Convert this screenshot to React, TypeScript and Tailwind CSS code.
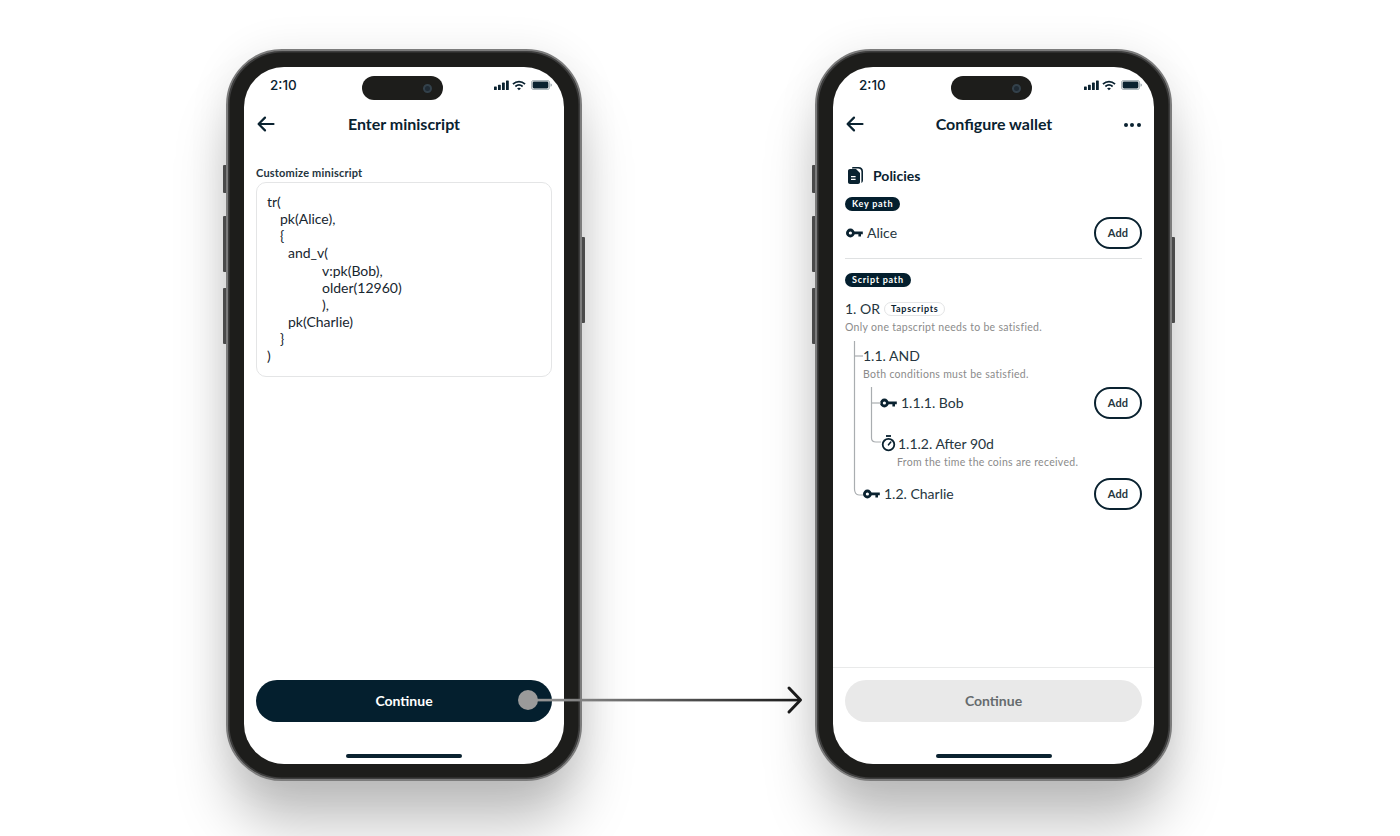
import type { ReactNode } from 'react';

const ink = '#0a2230';

function KeyIcon() {
  return (
    <svg viewBox="0 0 17 10" className="h-[10px] w-[17px] shrink-0" fill="none">
      <circle cx="4.4" cy="5" r="3" stroke={ink} strokeWidth="2.8" />
      <path d="M7.5 3.4H16.8V6.2H15V8.4H12.4V6.2H7.5Z" fill={ink} />
    </svg>
  );
}

function TimerIcon() {
  return (
    <svg viewBox="0 0 15 17" className="h-[17px] w-[15px] shrink-0" fill="none" stroke={ink}>
      <path d="M5 1H10" strokeWidth="1.8" />
      <circle cx="7.5" cy="9.6" r="5.8" strokeWidth="1.8" />
      <path d="M7.5 9.8L9.8 7" strokeWidth="1.6" strokeLinecap="round" />
    </svg>
  );
}

function PolicyIcon() {
  return (
    <svg viewBox="0 0 17 19" className="h-[19px] w-[17px] shrink-0">
      <path d="M6 1H11.5C14.5 1 16 2.6 16 5.5V14C16 15.6 15.4 16.6 14.4 17V5.6C14.4 3.6 13 2.4 11 2.4H5C5 1.6 5.3 1 6 1Z" fill={ink} />
      <path d="M3 3H9L13 7V16C13 17.2 12.2 18 11 18H3C1.8 18 1 17.2 1 16V5C1 3.8 1.8 3 3 3Z" fill={ink} />
      <path d="M4 10.6H8.6M4 13.4H8.6" stroke="#fff" strokeWidth="1.3" />
    </svg>
  );
}

function StatusIcons() {
  return (
    <div className="flex items-center gap-[3px]">
      <svg viewBox="0 0 15 10" className="h-[10px] w-[15px]" fill={ink}>
        <rect x="0" y="6.5" width="2.8" height="3.5" rx="0.6" />
        <rect x="4" y="4.8" width="2.8" height="5.2" rx="0.6" />
        <rect x="8" y="2.6" width="2.8" height="7.4" rx="0.6" />
        <rect x="12" y="0.4" width="2.8" height="9.6" rx="0.6" />
      </svg>
      <svg viewBox="0 0 15 11" className="h-[11px] w-[14px]" fill="none" stroke={ink} strokeWidth="1.9">
        <path d="M1 4C4.8 0.6 10.2 0.6 14 4" />
        <path d="M3.6 6.6C5.9 4.6 9.1 4.6 11.4 6.6" />
        <path d="M7.5 10.4L5.9 8.8C6.8 8.1 8.2 8.1 9.1 8.8Z" fill={ink} strokeWidth="0.6" />
      </svg>
      <svg viewBox="0 0 21 10" className="ml-[2px] h-[10px] w-[21px]">
        <rect x="0.4" y="0.4" width="18.2" height="9.2" rx="2.4" fill="none" stroke="#8d9aa2" strokeWidth="0.8" />
        <rect x="1.6" y="1.6" width="15.8" height="6.8" rx="1.4" fill={ink} />
        <path d="M19.6 3.4C20.4 3.6 20.8 4.2 20.8 5C20.8 5.8 20.4 6.4 19.6 6.6Z" fill="#8d9aa2" />
      </svg>
    </div>
  );
}

function BackArrow() {
  return (
    <svg viewBox="0 0 18 16" className="h-[16px] w-[18px]" fill="none" stroke={ink} strokeWidth="2.2" strokeLinecap="round" strokeLinejoin="round">
      <path d="M16.5 8H1.8M8 1.6L1.6 8L8 14.4" />
    </svg>
  );
}

function Phone({ title, menu, width, children }: { title: string; menu?: boolean; width: string; children: ReactNode }) {
  return (
    <div className={`relative h-[732px] ${width} shrink-0 rounded-[56px] border-[2px] border-[#7c7c7c] bg-[#1d1d1b] pb-[15px] pl-[16px] pr-[16px] pt-[16px] shadow-[inset_0_0_0_1.5px_#3e3e3e,0_48px_56px_-6px_rgba(0,0,0,0.25),0_0_40px_rgba(0,0,0,0.08)]`}>
      {/* side buttons */}
      <div className="absolute left-[-5px] top-[114px] h-[28px] w-[3px] rounded-l-[1px] bg-[#4a4a4a]" />
      <div className="absolute left-[-5px] top-[165px] h-[56px] w-[3px] rounded-l-[1px] bg-[#4a4a4a]" />
      <div className="absolute left-[-5px] top-[237px] h-[56px] w-[3px] rounded-l-[1px] bg-[#4a4a4a]" />
      <div className="absolute right-[-5px] top-[186px] h-[86px] w-[3px] rounded-r-[1px] bg-[#4a4a4a]" />

      <div className="relative flex h-full w-full flex-col overflow-hidden rounded-[40px] bg-white text-[#0a2230]">
        {/* dynamic island */}
        <div className="absolute left-[118px] top-[9px] flex h-[24px] w-[81px] items-center justify-end rounded-full bg-[#1d1d1b] pr-[11px]">
          <div className="h-[9px] w-[9px] rounded-full border-[2px] border-[#33414b] bg-[#1f2a33]" />
        </div>

        <div className="flex h-[36px] shrink-0 items-center justify-between pl-[26px] pr-[12px]">
          <span className="font-[family-name:Inter,sans-serif] text-[13.5px] font-medium">2:10</span>
          <StatusIcons />
        </div>

        <div className="flex h-[42px] shrink-0 items-center justify-between px-[13px]">
          <BackArrow />
          <span className="text-[16px] font-bold">{title}</span>
          {menu ? (
            <div className="mt-[2px] flex gap-[2.5px]">
              <div className="h-[4px] w-[4px] rounded-full bg-[#0a2230]" />
              <div className="h-[4px] w-[4px] rounded-full bg-[#0a2230]" />
              <div className="h-[4px] w-[4px] rounded-full bg-[#0a2230]" />
            </div>
          ) : (
            <div className="w-[18px]" />
          )}
        </div>

        {children}

        <div className="mx-auto mb-[6px] h-[4px] w-[116px] shrink-0 rounded-full bg-[#0a2230]" />
      </div>
    </div>
  );
}

function AddButton() {
  return (
    <button className="flex h-[32px] w-[48px] shrink-0 items-center justify-center rounded-full border-2 border-[#0a2230] bg-white text-[11px] font-bold tracking-[0.2px]">
      Add
    </button>
  );
}

function Badge({ children }: { children: ReactNode }) {
  return (
    <span className="flex h-[14px] w-fit items-center rounded-full bg-[#041f2e] px-[7px] text-[9px] font-bold tracking-[0.75px] text-white">
      {children}
    </span>
  );
}

function Hint({ children, className = '' }: { children: ReactNode; className?: string }) {
  return <p className={`text-[10.5px] leading-[14px] tracking-[0.3px] text-[#8b8b8b] ${className}`}>{children}</p>;
}

const scriptLines = [
  { text: 'tr(', indent: 'pl-0' },
  { text: 'pk(Alice),', indent: 'pl-[13px]' },
  { text: '{', indent: 'pl-[13px]' },
  { text: 'and_v(', indent: 'pl-[21px]' },
  { text: 'v:pk(Bob),', indent: 'pl-[55px]' },
  { text: 'older(12960)', indent: 'pl-[55px]' },
  { text: '),', indent: 'pl-[55px]' },
  { text: 'pk(Charlie)', indent: 'pl-[21px]' },
  { text: '}', indent: 'pl-[13px]' },
  { text: ')', indent: 'pl-0' },
];

function MiniscriptScreen() {
  return (
    <div className="flex min-h-0 flex-1 flex-col px-[12px]">
      <p className="mt-[21px] text-[11px] font-bold leading-[14px] tracking-[0.2px] text-[#24343e]">Customize miniscript</p>
      <div className="mt-[2px] h-[195px] rounded-[10px] border border-[#e4e5e6] pl-[10px] pt-[10px] text-[14px] leading-[17.15px] text-[#17262f]">
        {scriptLines.map((line, i) => (
          <div key={i} className={line.indent}>
            {line.text}
          </div>
        ))}
      </div>
      <button className="mt-auto mb-[32px] flex h-[42px] w-full shrink-0 items-center justify-center rounded-full bg-[#041f2e] pb-[2px] text-[14px] font-bold text-white">
        Continue
      </button>
    </div>
  );
}

function WalletScreen() {
  return (
    <div className="flex min-h-0 flex-1 flex-col">
      <div className="flex min-h-0 flex-1 flex-col px-[12px] text-[14px] text-[#263640]">
        <div className="mt-[20px] flex h-[20px] items-center gap-[9px] pl-[2px]">
          <PolicyIcon />
          <span className="text-[14px] font-bold text-[#0a2230]">Policies</span>
        </div>
        <div className="mt-[12px]">
          <Badge>Key path</Badge>
        </div>
        <div className="mt-[6px] flex h-[32px] items-center justify-between">
          <div className="flex items-center gap-[4px] pl-px">
            <KeyIcon />
            <span className="-mt-[2px]">Alice</span>
          </div>
          <AddButton />
        </div>
        <div className="mt-[9px] h-px bg-[#dfe1e2]" />
        <div className="mt-[14px]">
          <Badge>Script path</Badge>
        </div>
        <div className="mt-[13px] flex h-[16px] items-center gap-[4px]">
          <span>1. OR</span>
          <span className="mt-[2px] flex h-[14px] items-center rounded-full border border-[#e3e4e5] px-[6px] text-[9px] font-bold tracking-[0.7px] text-[#0a2230]">
            Tapscripts
          </span>
        </div>
        <Hint className="mt-[4px]">Only one tapscript needs to be satisfied.</Hint>

        {/* tree */}
        <div className="relative mt-[7px] pl-[18px]">
          <svg className="absolute left-0 top-0 h-[160px] w-[60px]" viewBox="0 0 60 160" fill="none" stroke="#a9adb0" strokeWidth="1.2">
            <path d="M9.5 0V148C9.5 151 11 154 14 154H18" />
            <path d="M9.5 15H18" />
            <path d="M26.5 46V97C26.5 100 28 101 31 101H36" />
            <path d="M26.5 62H36" />
          </svg>
          <div className="mt-[6px] flex h-[16px] items-center">
            <span>1.1. AND</span>
          </div>
          <Hint className="mt-[4px]">Both conditions must be satisfied.</Hint>
          <div className="mt-[6px] flex h-[32px] items-center justify-between">
            <div className="flex items-center gap-[4px] pl-[17px]">
              <KeyIcon />
              <span className="-mt-[2px]">1.1.1. Bob</span>
            </div>
            <AddButton />
          </div>
          <div className="mt-[16px] flex h-[17px] items-center gap-[2px] pl-[18px]">
            <TimerIcon />
            <span>1.1.2. After 90d</span>
          </div>
          <Hint className="mt-[3px] pl-[34px]">From the time the coins are received.</Hint>
          <div className="mt-[9px] flex h-[32px] items-center justify-between">
            <div className="flex items-center gap-[4px]">
              <KeyIcon />
              <span className="-mt-[2px]">1.2. Charlie</span>
            </div>
            <AddButton />
          </div>
        </div>
      </div>
      <div className="flex h-[65px] shrink-0 flex-col border-t border-[#e9eaea] px-[12px] pt-[12px]">
        <button className="flex h-[42px] w-full items-center justify-center rounded-full bg-[#e9e9e9] pb-[2px] text-[14px] font-bold text-[#666b6e]">
          Continue
        </button>
      </div>
      <div className="h-[22px] shrink-0" />
    </div>
  );
}

export default function App() {
  return (
    <div className="relative flex h-[836px] w-[1400px] items-start gap-[233px] overflow-hidden bg-white pl-[226px] pt-[49px] font-[family-name:Lato,sans-serif]">
      <Phone title="Enter miniscript" width="w-[356px]">
        <MiniscriptScreen />
      </Phone>
      <Phone title="Configure wallet" width="w-[357px]" menu>
        <WalletScreen />
      </Phone>

      {/* arrow joining the two screens */}
      <svg className="absolute left-[516px] top-[684px] h-[32px] w-[292px]" viewBox="0 0 292 32" fill="none">
        <defs>
          <linearGradient id="arrow-line" x1="0" y1="0" x2="1" y2="0">
            <stop offset="0%" stopColor="#9a9a9a" />
            <stop offset="100%" stopColor="#1a1a1a" />
          </linearGradient>
        </defs>
        <rect x="12" y="14.8" width="272" height="2.6" fill="url(#arrow-line)" />
        <path d="M273 4L284.5 16L273 28" stroke="#1a1a1a" strokeWidth="3" strokeLinecap="round" strokeLinejoin="round" />
        <circle cx="12" cy="16" r="10" fill="#9a9a9a" />
      </svg>
    </div>
  );
}
